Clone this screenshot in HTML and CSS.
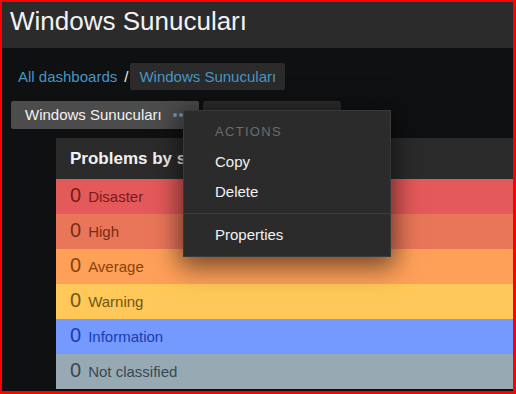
FILE: index.html
```html
<!DOCTYPE html>
<html lang="tr">
<head>
    <meta charset="UTF-8">
    <meta name="viewport" content="width=device-width, initial-scale=1.0">
    <title>Windows Sunucuları</title>
    <link rel="stylesheet" href="styles.css">
</head>
<body>

    <div class="frame">
        <div class="page-header">
            <h1>Windows Sunucuları</h1>
        </div>

        <div class="breadcrumbs">
            <a href="#">All dashboards</a>
            <span class="sep">/</span>
            <span class="crumb-current">Windows Sunucuları</span>
        </div>

        <div class="tabs">
            <div class="tab tab-active">
                Windows Sunucuları
                <span class="dots"><i></i><i></i><i></i></span>
            </div>
            <div class="tab tab-other"></div>
        </div>

        <div class="widget">
            <div class="widget-head">Problems by severity</div>
            <div class="sev sev-disaster"><span class="count">0</span><span class="label">Disaster</span></div>
            <div class="sev sev-high"><span class="count">0</span><span class="label">High</span></div>
            <div class="sev sev-average"><span class="count">0</span><span class="label">Average</span></div>
            <div class="sev sev-warning"><span class="count">0</span><span class="label">Warning</span></div>
            <div class="sev sev-info"><span class="count">0</span><span class="label">Information</span></div>
            <div class="sev sev-nc"><span class="count">0</span><span class="label">Not classified</span></div>
        </div>

        <!-- page action menu, opened over the tabs -->
        <div class="menu">
            <div class="menu-title">ACTIONS</div>
            <a class="menu-item" href="#">Copy</a>
            <a class="menu-item" href="#">Delete</a>
            <div class="menu-sep"></div>
            <a class="menu-item" href="#">Properties</a>
        </div>
    </div>

</body>
</html>
```

FILE: styles.css
```css
body {
    margin: 0;
    font-family: "Liberation Sans", Arial, sans-serif;
    color: #f2f2f2;
    background-color: #0e1012;
}
.frame {
    position: relative;
    height: 394px;
    box-sizing: border-box;
    border: solid #ff0000;
    border-width: 2px 3px 3px 2px;
    background-color: #0e1012;
    overflow: hidden;
}
.page-header {
    height: 46px;
    box-sizing: border-box;
    padding: 4px 8px 0;
    background-color: #2b2b2b;
}
.page-header h1 {
    margin: 0;
    font-size: 26px;
    font-weight: normal;
    line-height: 30px;
    color: #f2f2f2;
}
.breadcrumbs {
    display: flex;
    align-items: center;
    margin-top: 15px;
    padding-left: 16px;
    font-size: 15px;
}
.breadcrumbs a {
    color: #4796c4;
    text-decoration: none;
}
.sep {
    margin: 0 2px 0 7px;
    color: #f2f2f2;
}
.crumb-current {
    height: 27px;
    line-height: 27px;
    padding: 0 9px;
    border-radius: 2px;
    background-color: #2b2b2b;
    color: #4796c4;
}
.tabs {
    display: flex;
    gap: 4px;
    margin-top: 11px;
    padding-left: 9px;
}
.tab {
    height: 28px;
    line-height: 28px;
    padding: 0 10px 0 14px;
    border-radius: 2px;
    font-size: 15px;
}
.tab-active {
    display: flex;
    align-items: center;
    background-color: #4c4c4c;
}
.tab-other {
    width: 114px;
    background-color: #2b2b2b;
}
.dots {
    display: flex;
    gap: 2px;
    margin-left: 11px;
}
.dots i {
    width: 4px;
    height: 4px;
    border-radius: 50%;
    background-color: #6f9cbf;
}
.widget {
    width: 480px;
    margin: 9px 0 0 54px;
}
.widget-head {
    height: 41px;
    line-height: 41px;
    padding-left: 14px;
    background-color: #2b2b2b;
    font-size: 17px;
    font-weight: bold;
    white-space: nowrap;
}
.sev {
    display: flex;
    align-items: baseline;
    height: 35px;
    box-sizing: border-box;
    padding: 5px 0 0 14px;
}
.count {
    font-size: 20px;
}
.label {
    margin-left: 7px;
    font-size: 15px;
}
.sev-disaster { background-color: #e45959; color: #7a1a1a; }
.sev-high { background-color: #e97659; color: #7a2c16; }
.sev-average { background-color: #ffa059; color: #8a4006; }
.sev-warning { background-color: #ffc859; color: #705716; }
.sev-info { background-color: #7499ff; color: #1a3cb0; }
.sev-nc { background-color: #97aab3; color: #374853; }

.menu {
    position: absolute;
    left: 181px;
    top: 108px;
    width: 206px;
    padding-bottom: 6px;
    border: 1px solid #3a3a3a;
    background-color: #2b2b2b;
    box-shadow: 0 6px 24px 4px rgba(0, 0, 0, 0.55);
}
.menu-title {
    padding: 11px 0 5px 31px;
    line-height: 20px;
    font-size: 13px;
    letter-spacing: 1.3px;
    color: #6c6c6c;
}
.menu-item {
    display: block;
    padding-left: 31px;
    line-height: 30px;
    font-size: 15px;
    color: #f2f2f2;
    text-decoration: none;
}
.menu-sep {
    margin: 6px 0;
    border-top: 1px solid #3a3a3a;
}
```
